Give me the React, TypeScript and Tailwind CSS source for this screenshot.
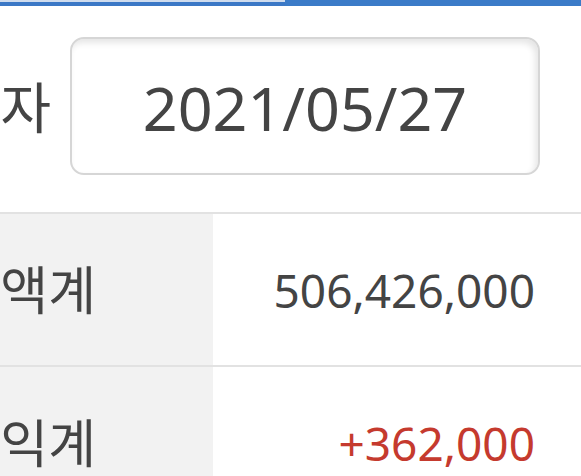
export default function App() {
  const font = { fontFamily: '"Noto Sans", "Noto Sans CJK KR", sans-serif' };
  return (
    <div className="w-[581px] h-[476px] overflow-hidden bg-white text-[#444]" style={font}>
      <div className="flex h-[6px]">
        <div className="w-[285px] flex flex-col">
          <div className="h-[2px] bg-[#cfdcee]" />
          <div className="h-[4px] bg-[#3b78c6]" />
        </div>
        <div className="flex-1 bg-[#3b7bc8]" />
      </div>
      <div className="flex items-center mt-[31px] h-[138px]">
        <div className="w-[51px] flex justify-end whitespace-nowrap text-[55px] leading-none">
          기준일자
        </div>
        <div className="ml-[19px] w-[470px] h-[138px] rounded-[14px] border-2 border-[#d6d6d6] shadow-[inset_-3px_4px_6px_rgba(0,0,0,0.10)] flex items-center justify-center text-[61px] leading-none pt-[2px]">
          2021/05/27
        </div>
      </div>
      <div className="mt-[37px] border-t-2 border-[#e2e2e2]">
        <div className="flex h-[153px] border-b-2 border-[#e2e2e2]">
          <div className="w-[213px] bg-[#f2f2f2] flex items-center">
            <div className="w-[96px] flex justify-end whitespace-nowrap text-[52px] leading-none">매입금액계</div>
          </div>
          <div className="flex-1 flex items-center justify-end pr-[46px] text-[46px] leading-none">
            506,426,000
          </div>
        </div>
        <div className="flex h-[153px] border-b-2 border-[#e2e2e2]">
          <div className="w-[213px] bg-[#f2f2f2] flex items-center">
            <div className="w-[96px] flex justify-end whitespace-nowrap text-[52px] leading-none">평가손익계</div>
          </div>
          <div className="flex-1 flex items-center justify-end pr-[46px] text-[46px] leading-none text-[#c53a2e]">
            +362,000
          </div>
        </div>
      </div>
    </div>
  );
}
